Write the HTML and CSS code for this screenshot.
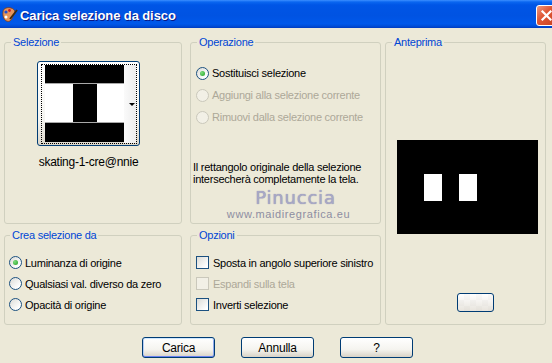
FILE: index.html
```html
<!DOCTYPE html>
<html lang="it">
<head>
  <meta charset="UTF-8">
  <title>Carica selezione da disco</title>
  <link rel="stylesheet" href="styles.css">
</head>
<body>
  <!-- Title bar -->
  <div class="titlebar">
    <svg class="app-icon" width="17" height="18" viewBox="0 0 17 18">
      <path d="M2 6 C2 2 7 1 10 2 C14 3 15 7 13 9 C11 10 12 13 9 15 C5 17 1 12 2 6Z" fill="#E8955A" stroke="#7A3A1A" stroke-width="0.8"/>
      <circle cx="5" cy="6" r="1.6" fill="#2050D0"/>
      <circle cx="8.5" cy="4.5" r="1.4" fill="#D02020"/>
      <circle cx="5" cy="11" r="1.5" fill="#fff"/>
      <path d="M9 13 L16 4" stroke="#3C2A10" stroke-width="1.8"/>
    </svg>
    <span class="title">Carica selezione da disco</span>
    <span class="close-btn">
      <svg width="13" height="13" viewBox="0 0 13 13"><path d="M2.5 2.5 L10.5 10.5 M10.5 2.5 L2.5 10.5" stroke="#fff" stroke-width="2.2" stroke-linecap="square"/></svg>
    </span>
  </div>

  <div class="dialog">
    <div class="groups">
      <!-- Selezione -->
      <fieldset class="group group-sel">
        <legend>Selezione</legend>
        <div class="sel-body">
          <div class="thumb-btn">
            <div class="thumb-focus">
              <div class="thumb-img">
                <div class="band band-top"></div>
                <div class="band-mid"><div class="stem"></div></div>
                <div class="band band-bot"></div>
              </div>
              <div class="thumb-strip"><span class="arrow"></span></div>
            </div>
          </div>
          <div class="thumb-name">skating-1-cre@nnie</div>
        </div>
      </fieldset>

      <!-- Operazione -->
      <fieldset class="group group-op">
        <legend>Operazione</legend>
        <div class="op-body">
          <div class="opt-row"><span class="radio checked"></span>Sostituisci selezione</div>
          <div class="opt-row disabled"><span class="radio"></span>Aggiungi alla selezione corrente</div>
          <div class="opt-row disabled"><span class="radio"></span>Rimuovi dalla selezione corrente</div>
          <p class="note">Il rettangolo originale della selezione<br>intersecherà completamente la tela.</p>
          <div class="mark">Pinuccia</div>
          <div class="mark-url">www.maidiregrafica.eu</div>
        </div>
      </fieldset>

      <!-- Anteprima -->
      <fieldset class="group group-prev">
        <legend>Anteprima</legend>
        <div class="prev-body">
          <div class="preview">
            <div class="hole"></div>
            <div class="hole"></div>
          </div>
          <div class="btn small-btn"></div>
        </div>
      </fieldset>

      <!-- Crea selezione da -->
      <fieldset class="group group-crea">
        <legend>Crea selezione da</legend>
        <div class="list-body">
          <div class="opt-row row21"><span class="radio checked"></span>Luminanza di origine</div>
          <div class="opt-row row21"><span class="radio"></span>Qualsiasi val. diverso da zero</div>
          <div class="opt-row row21"><span class="radio"></span>Opacità di origine</div>
        </div>
      </fieldset>

      <!-- Opzioni -->
      <fieldset class="group group-opts">
        <legend>Opzioni</legend>
        <div class="list-body">
          <div class="opt-row row21 wide"><span class="check"></span>Sposta in angolo superiore sinistro</div>
          <div class="opt-row row21 wide disabled"><span class="check"></span>Espandi sulla tela</div>
          <div class="opt-row row21 wide"><span class="check"></span>Inverti selezione</div>
        </div>
      </fieldset>
    </div>

    <div class="actions">
      <div class="btn default">Carica</div>
      <div class="btn">Annulla</div>
      <div class="btn">?</div>
    </div>
  </div>
</body>
</html>
```

FILE: styles.css
```css
/* General */
* {
  box-sizing: border-box;
}

body {
  margin: 0;
  width: 552px;
  height: 363px;
  overflow: hidden;
  background: #ECE9D8;
  font-family: 'Liberation Sans', Arial, sans-serif;
  font-size: 11px;
  letter-spacing: -0.25px;
  color: #000;
}

/* Title bar */
.titlebar {
  height: 28px;
  display: flex;
  align-items: center;
  overflow: hidden;
  padding-left: 1px;
  background: linear-gradient(#3C8FFF 0, #0A66F0 2px, #0055E6 5px, #0053E2 55%, #0058EA 85%, #004ED8 93%, #003BC0 100%);
}

.app-icon {
  flex: none;
  margin-right: 2px;
  margin-top: 1px;
}

.title {
  color: #fff;
  font-weight: bold;
  font-size: 13px;
  letter-spacing: -0.1px;
  text-shadow: 1px 1px #0A1883;
  margin-top: 3px;
}

.close-btn {
  flex: none;
  align-self: flex-start;
  margin: 5px -5px 0 auto;
  width: 21px;
  height: 21px;
  border: 1px solid #fff;
  border-radius: 3px;
  background: linear-gradient(135deg, #EE9A80, #E05A38 40%, #C8401F);
  display: flex;
  align-items: center;
  justify-content: center;
}

/* Group boxes */
.dialog {
  padding: 8px 0 0 4px;
}

.groups {
  display: grid;
  grid-template-columns: 186px 195px 161px;
  grid-template-rows: 188px 96px;
  row-gap: 5px;
}

.group {
  margin: 0;
  padding: 0 5px;
  min-width: 0;
  border: 1px solid #D0D0BF;
  border-radius: 3px;
}

.group legend {
  color: #0046D5;
  font-size: 11px;
  line-height: 13px;
  padding: 0 2px;
  margin-left: 1px;
}

.group-sel,
.group-crea {
  width: 178px;
}

.group-op,
.group-opts {
  width: 191px;
}

.group-sel { grid-column: 1; grid-row: 1; }
.group-op { grid-column: 2; grid-row: 1; }
.group-prev { grid-column: 3; grid-row: 1 / span 2; }
.group-crea { grid-column: 1; grid-row: 2; padding-left: 4px; }
.group-opts { grid-column: 2; grid-row: 2; }

/* Selezione */
.sel-body {
  display: flex;
  flex-direction: column;
  align-items: flex-start;
  padding: 12px 0 0 27px;
}

.thumb-btn {
  width: 103px;
  height: 85px;
  border: 1px solid #003C74;
  border-radius: 3px;
  padding: 2px 2px 1px 3px;
  background: linear-gradient(#fff, #F4F4F0 70%, #DCD7CB);
}

.thumb-focus {
  height: 100%;
  border: 1px dotted #000;
  padding-left: 3px;
  display: flex;
}

.thumb-img {
  width: 79px;
  height: 77px;
  display: flex;
  flex-direction: column;
}

.band {
  background: #000;
}

.band-top { height: 18px; }
.band-bot { height: 19px; }

.band-mid {
  height: 40px;
  background: #fff;
  border-top: 1px solid #A8A8A8;
  border-bottom: 1px solid #A8A8A8;
  padding-left: 28px;
}

.stem {
  width: 24px;
  height: 100%;
  background: #000;
}

.thumb-strip {
  flex: 1;
  display: flex;
  align-items: center;
  justify-content: flex-end;
  padding-right: 1px;
  background: linear-gradient(90deg, #FAFAFA, #EDEDED);
}

.arrow {
  width: 0;
  height: 0;
  border-left: 3px solid transparent;
  border-right: 3px solid transparent;
  border-top: 3px solid #000;
}

.thumb-name {
  width: 103px;
  margin-top: 10px;
  line-height: 13px;
  font-size: 12px;
  text-align: center;
  white-space: nowrap;
}

/* Option rows */
.op-body {
  padding-top: 13px;
}

.opt-row {
  height: 22px;
  display: flex;
  align-items: center;
  gap: 3px;
  white-space: nowrap;
}

.opt-row.row21 {
  height: 21px;
}

.opt-row.wide {
  gap: 4px;
}

.opt-row.disabled {
  color: #ACA899;
}

.radio {
  flex: none;
  width: 13px;
  height: 13px;
  border: 1px solid #1C5180;
  border-radius: 50%;
  background: linear-gradient(135deg, #DCDCD7, #fff 80%);
  display: flex;
  align-items: center;
  justify-content: center;
}

.radio.checked::after {
  content: '';
  width: 5px;
  height: 5px;
  border-radius: 50%;
  background: radial-gradient(circle at 35% 35%, #7DDD7D, #21A121);
}

.check {
  flex: none;
  width: 13px;
  height: 13px;
  border: 1px solid #1C5180;
  background: linear-gradient(135deg, #DCDCD7, #fff 85%);
}

.disabled .radio,
.disabled .check {
  border-color: #CAC8BB;
  background: #F2F0E6;
}

.note {
  margin: 33px 0 0 -3px;
  line-height: 12px;
}

.mark {
  margin-top: 3px;
  padding-left: 20px;
  text-align: center;
  font-family: 'DejaVu Sans', sans-serif;
  font-size: 18px;
  line-height: 20px;
  letter-spacing: 0.8px;
  color: #A8A8C6;
  text-shadow: 0 0 1px #8585A8;
}

.mark-url {
  text-align: center;
  line-height: 12px;
  letter-spacing: 0.6px;
  color: #8E8EA2;
  padding-left: 6px;
}

.list-body {
  padding-top: 10px;
}

/* Anteprima */
.prev-body {
  display: flex;
  flex-direction: column;
  align-items: flex-start;
}

.preview {
  width: 141px;
  height: 94px;
  margin: 91px 0 0 6px;
  background: #000;
  display: flex;
  gap: 17px;
  padding: 34px 0 0 27px;
}

.hole {
  width: 18px;
  height: 27px;
  background: #fff;
}

/* Buttons */
.btn {
  width: 73px;
  height: 21px;
  border: 1px solid #003C74;
  border-radius: 3px;
  background: linear-gradient(#fff, #F5F4EF 60%, #D8D2C6);
  display: flex;
  align-items: center;
  justify-content: center;
  font-size: 12px;
}

.btn.default {
  box-shadow: inset 0 1px #CEE7FF, inset 0 -1px #6982EE, inset 1px 0 #B7CEF5, inset -1px 0 #8FA8EC;
}

.small-btn {
  width: 37px;
  height: 19px;
  margin: 59px 0 0 66px;
  background:
    linear-gradient(rgba(255,255,255,0.4), rgba(216,210,198,0.6)),
    repeating-conic-gradient(#F6F6F6 0 25%, #FFFFFF 0 50%) 0 0 / 12px 12px;
}

.actions {
  display: flex;
  gap: 26px;
  margin-top: 12px;
  padding-left: 138px;
}
```
